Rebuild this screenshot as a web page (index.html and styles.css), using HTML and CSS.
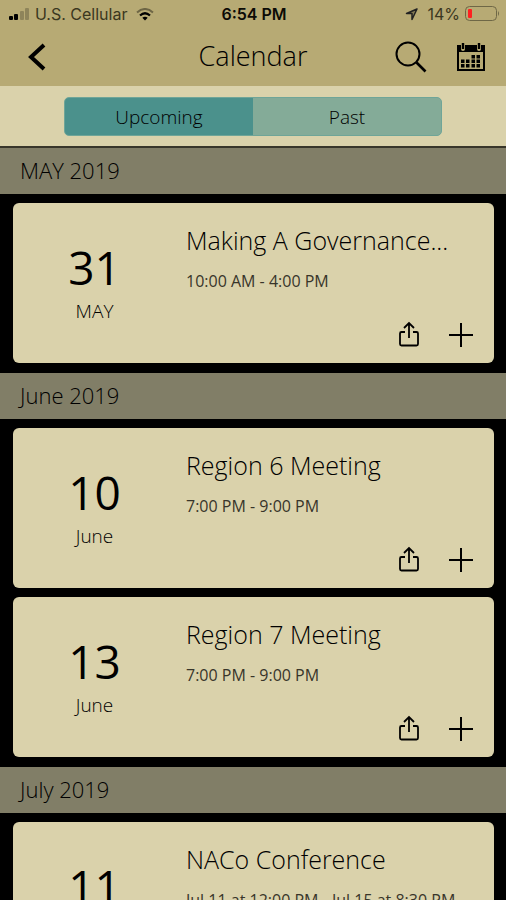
FILE: index.html
```html
<!DOCTYPE html>
<html lang="en">
<head>
<meta charset="utf-8">
<meta name="viewport" content="width=device-width, initial-scale=1">
<title>Calendar</title>
<link rel="stylesheet" href="styles.css">
</head>
<body>
<svg class="defs" aria-hidden="true">
  <symbol id="share" viewBox="0 0 24 28">
    <path d="M8 11H4.500a1.500 1.500 0 0 0-1.500 1.500V23a1.500 1.500 0 0 0 1.500 1.500h15a1.500 1.500 0 0 0 1.500-1.500V12.500a1.500 1.500 0 0 0-1.500-1.500H16M12 17V2.500M7 7l5-5 5 5" fill="none" stroke="currentColor" stroke-width="1.800"/>
  </symbol>
  <symbol id="plus" viewBox="0 0 26 26">
    <path d="M13 1v24M1 13h24" fill="none" stroke="currentColor" stroke-width="2"/>
  </symbol>
</svg>
<div class="app">
  <header class="header">
    <div class="status">
      <div class="carrier">
        <svg width="22" height="14" viewBox="0 0 22 14" aria-hidden="true">
          <rect x="1" y="9" width="4" height="4" rx="1"/>
          <rect x="6" y="7" width="4" height="6" rx="1"/>
          <rect x="12" y="4" width="4" height="9" rx="1" opacity=".22"/>
          <rect x="17" y="1" width="4" height="12" rx="1" opacity=".22"/>
        </svg>
        <span>U.S. Cellular</span>
        <svg class="wifi" width="18" height="13" viewBox="0 0 18 13" aria-hidden="true">
          <path d="M1 4.500Q9-2.500 17 4.500" fill="none" stroke="#000" stroke-width="2" opacity=".4"/>
          <path d="M4 7.500Q9 3 14 7.500" fill="none" stroke="#000" stroke-width="2.200"/>
          <path d="M6.300 9.800Q9 7.500 11.700 9.800L9 12.500z"/>
        </svg>
      </div>
      <span class="clock">6:54 PM</span>
      <div class="power">
        <svg class="locate" width="13" height="13" viewBox="0 0 13 13" aria-hidden="true">
          <path d="M12 1L1.500 5.500H7V11.500z" fill="#0004" stroke="#222" stroke-width="1.500" stroke-linejoin="round"/>
        </svg>
        <span>14%</span>
        <svg width="35" height="16" viewBox="0 0 35 16" aria-hidden="true">
          <rect x=".5" y=".5" width="31" height="14" rx="4" fill="none" stroke="#6e6746"/>
          <rect x="3" y="3" width="4" height="9" rx="1" fill="#ff2020"/>
          <path d="M33 5q2 2.500 0 5z" fill="#6e6746"/>
        </svg>
      </div>
    </div>
    <nav class="nav">
      <button class="icon-button back" aria-label="Back">
        <svg width="18" height="28" viewBox="0 0 18 28"><path d="M16 2L3 14l13 12" fill="none" stroke="currentColor" stroke-width="4"/></svg>
      </button>
      <h1>Calendar</h1>
      <div class="tools">
        <button class="icon-button" aria-label="Search">
          <svg width="32" height="32" viewBox="0 0 32 32"><g fill="none" stroke="currentColor"><circle cx="13" cy="13" r="11.500" stroke-width="2"/><path d="M21.500 21.500l9 9" stroke-width="2.600"/></g></svg>
        </button>
        <button class="icon-button" aria-label="Month view">
          <svg width="30" height="30" viewBox="0 0 30 30">
            <path d="M1 3h4v4a2 2 0 0 0 4 0V3h12v4a2 2 0 0 0 4 0V3h4v7H1z"/>
            <path d="M2 9v19h26V9" fill="none" stroke="currentColor" stroke-width="2"/>
            <path d="M7 1v6M23 1v6" stroke="currentColor" stroke-width="2.400"/>
            <path d="M15.500 13h3.500v3.500h-3.500zM20.500 13H24v3.500h-3.500zM5 17.500h3.500V21H5zM10 17.500h3.500V21H10zM15.500 17.500h3.500V21h-3.500zM20.500 17.500H24V21h-3.500zM5 22h3.500v3.500H5zM10 22h3.500v3.500H10zM15.500 22h3.500v3.500h-3.500zM20.500 22H24v3.500h-3.500z"/>
          </svg>
        </button>
      </div>
    </nav>
  </header>
  <div class="filter">
    <div class="segments">
      <button class="segment active" aria-pressed="true">Upcoming</button>
      <button class="segment" aria-pressed="false">Past</button>
    </div>
  </div>
  <main class="list">
    <section>
      <h2>MAY 2019</h2>
      <div class="cards">
        <article class="card">
          <div class="date"><span class="day">31</span><span class="month">MAY</span></div>
          <div class="info">
            <h3>Making A Governance...</h3>
            <p>10:00 AM - 4:00 PM</p>
            <div class="actions">
              <button class="icon-button" aria-label="Share"><svg width="24" height="28"><use href="#share"/></svg></button>
              <button class="icon-button" aria-label="Add"><svg width="26" height="26"><use href="#plus"/></svg></button>
            </div>
          </div>
        </article>
      </div>
    </section>
    <section>
      <h2>June 2019</h2>
      <div class="cards">
        <article class="card">
          <div class="date"><span class="day">10</span><span class="month">June</span></div>
          <div class="info">
            <h3>Region 6 Meeting</h3>
            <p>7:00 PM - 9:00 PM</p>
            <div class="actions">
              <button class="icon-button" aria-label="Share"><svg width="24" height="28"><use href="#share"/></svg></button>
              <button class="icon-button" aria-label="Add"><svg width="26" height="26"><use href="#plus"/></svg></button>
            </div>
          </div>
        </article>
        <article class="card">
          <div class="date"><span class="day">13</span><span class="month">June</span></div>
          <div class="info">
            <h3>Region 7 Meeting</h3>
            <p>7:00 PM - 9:00 PM</p>
            <div class="actions">
              <button class="icon-button" aria-label="Share"><svg width="24" height="28"><use href="#share"/></svg></button>
              <button class="icon-button" aria-label="Add"><svg width="26" height="26"><use href="#plus"/></svg></button>
            </div>
          </div>
        </article>
      </div>
    </section>
    <section>
      <h2>July 2019</h2>
      <div class="cards">
        <article class="card">
          <div class="date"><span class="day">11</span></div>
          <div class="info">
            <h3>NACo Conference</h3>
            <p>Jul 11 at 12:00 PM - Jul 15 at 8:30 PM</p>
          </div>
        </article>
      </div>
    </section>
  </main>
</div>
</body>
</html>
```
FILE: styles.css
```css
* {
  box-sizing: border-box;
}

body,
h1,
h2,
h3,
p {
  margin: 0;
  font-weight: 300;
}

body {
  background: #000;
  color: #000;
  font-family: "Open Sans", "Noto Sans", sans-serif;
}

.defs {
  position: absolute;
  width: 0;
  height: 0;
}

.app {
  display: flex;
  flex-direction: column;
  height: 100vh;
}

svg {
  display: block;
}

button {
  padding: 0;
  border: 0;
  background: none;
  color: inherit;
  font: inherit;
}

.header {
  background: #b7aa74;
}

.status {
  display: grid;
  grid-template-columns: 1fr auto 1fr;
  align-items: center;
  height: 28px;
  padding: 0 6px 0 8px;
  font-family: Inter, "Liberation Sans", sans-serif;
  font-size: 16px;
  font-weight: 400;
  color: #3b3720;
}

.carrier,
.power {
  display: flex;
  align-items: center;
  gap: 5px;
}

.wifi {
  margin-left: 4px;
}

.locate {
  margin-right: 4px;
}

.clock {
  font-weight: 600;
  color: #0c0b06;
}

.power {
  justify-content: flex-end;
}

.nav {
  display: grid;
  grid-template-columns: 1fr auto 1fr;
  align-items: center;
  height: 58px;
  padding: 0 20px;
}

.nav h1 {
  font-size: 27px;
  line-height: 56px;
  padding-bottom: 2px;
}

.back {
  justify-self: start;
  padding-left: 8px;
}

.tools {
  display: flex;
  justify-content: flex-end;
  align-items: center;
  gap: 29px;
}

.filter {
  padding: 11px 64px 10px;
  border-bottom: 2px solid #38362a;
  background: #dad2ab;
}

.segments {
  display: flex;
  height: 39px;
  border: 1px solid #6fa598;
  border-radius: 5px;
  overflow: hidden;
  background: #84ab98;
}

.segment {
  flex: 1;
  font-size: 19px;
}

.active {
  background: #4b918c;
}

.list {
  flex: 1;
  min-height: 0;
  overflow-y: auto;
  scrollbar-width: none;
}

h2 {
  padding: 0 20px 2px;
  background: #817e67;
  font-size: 22px;
  line-height: 44px;
}

.cards {
  display: grid;
  gap: 9px;
  padding: 9px 12px 10px 13px;
}

.card {
  display: grid;
  grid-template-columns: 163px 1fr;
  height: 160px;
  border-radius: 6px;
  background: #dad2ab;
}

.date {
  display: flex;
  flex-direction: column;
  align-items: center;
  padding-top: 33px;
}

.day {
  font-size: 46px;
  font-weight: 400;
  line-height: 62px;
}

.month {
  font-size: 19px;
  line-height: 26px;
}

.info {
  display: flex;
  flex-direction: column;
  padding: 19px 20px 14px 10px;
}

h3 {
  font-size: 25px;
  line-height: 36px;
  white-space: nowrap;
}

p {
  padding-top: 11px;
  font-size: 16px;
  font-weight: 400;
  line-height: 24px;
  white-space: nowrap;
  color: #38352a;
}

.actions {
  display: flex;
  justify-content: flex-end;
  align-items: center;
  gap: 27px;
  margin-top: auto;
}
```
